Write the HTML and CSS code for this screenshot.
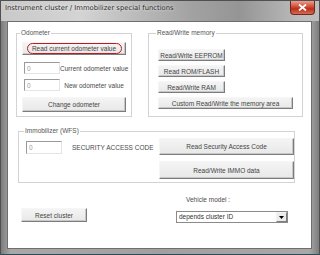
FILE: index.html
```html
<!DOCTYPE html>
<html lang="en">

<head>
    <meta charset="UTF-8">
    <title>Instrument cluster / Immobilizer special functions</title>
    <link rel="stylesheet" href="styles.css">
</head>

<body>
    <div class="window">
        <div class="titlebar">
            <span class="title">Instrument cluster / Immobilizer special functions</span>
            <button class="close-btn">
                <svg width="9" height="7" viewBox="0 0 9 7">
                    <path d="M1 0.5 L8 6.5 M8 0.5 L1 6.5" stroke="#fff" stroke-width="1.8" />
                </svg>
            </button>
        </div>

        <div class="client">
            <div class="top-row">
                <!-- Odometer -->
                <fieldset class="group odometer">
                    <legend>Odometer</legend>
                    <button class="btn btn-wide highlighted"><span class="ring">Read current odometer value</span></button>
                    <div class="field-row first">
                        <input class="num" type="text" value="0">
                        <span class="field-label">Current odometer value</span>
                    </div>
                    <div class="field-row">
                        <input class="num" type="text" value="0">
                        <span class="field-label">New odometer value</span>
                    </div>
                    <button class="btn btn-wide change">Change odometer</button>
                </fieldset>

                <!-- Read/Write memory -->
                <fieldset class="group memory">
                    <legend>Read/Write memory</legend>
                    <button class="btn btn-mem">Read/Write EEPROM</button>
                    <button class="btn btn-mem">Read ROM/FLASH</button>
                    <button class="btn btn-mem">Read/Write RAM</button>
                    <button class="btn btn-long">Custom Read/Write the memory area</button>
                </fieldset>
            </div>

            <!-- Immobilizer -->
            <fieldset class="group immo">
                <legend>Immobilizer (WFS)</legend>
                <div class="immo-left">
                    <input class="num code" type="text" value="0">
                    <span class="code-label">SECURITY ACCESS CODE</span>
                </div>
                <div class="immo-right">
                    <button class="btn btn-long tall">Read Security Access Code</button>
                    <button class="btn btn-long tall second">Read/Write IMMO data</button>
                </div>
            </fieldset>

            <div class="bottom-row">
                <button class="btn reset">Reset cluster</button>
                <div class="vehicle">
                    <span class="vehicle-label">Vehicle model :</span>
                    <div class="select">
                        <span class="select-text">depends cluster ID</span>
                        <span class="select-arrow">
                            <svg width="5" height="3" viewBox="0 0 5 3"><path d="M0 0 H5 L2.5 3 Z" fill="#000" /></svg>
                        </span>
                    </div>
                </div>
            </div>
        </div>
    </div>
</body>

</html>
```

FILE: styles.css
```css
body {
    margin: 0;
    font-family: "Liberation Sans", Arial, sans-serif;
    color: #4a4a4a;
}

.window {
    width: 320px;
    height: 255px;
    box-sizing: border-box;
    display: flex;
    flex-direction: column;
    background: linear-gradient(90deg, #7d7d7d, #a8a8a8 3%, #a0a0a0 50%, #a8a8a8 97%, #7d7d7d);
    border: 1px solid #505050;
    border-bottom-color: #2e4a52;
}

.titlebar {
    height: 20px;
    display: flex;
    align-items: flex-start;
    background: linear-gradient(90deg, #c9c9c9, #d4d4d4 25%, #a2a2a2 60%, #959595 75%, #bdbdbd 95%);
}

.title {
    margin: 3px 0 0 4px;
    font-family: "DejaVu Sans", sans-serif;
    font-size: 6.8px;
    line-height: 9px;
    color: #2a2a2a;
    text-shadow: 0 0 3px #fff;
}

.close-btn {
    margin: 0 4px 0 auto;
    width: 25px;
    height: 14px;
    padding: 0;
    border: 1px solid #6b2a20;
    border-top: none;
    border-radius: 0 0 4px 4px;
    background: linear-gradient(#e9a08f, #d24a31 45%, #b8301c 60%, #d86a4f);
    display: flex;
    align-items: center;
    justify-content: center;
}

.client {
    flex: 1;
    margin: 0 7px 5px 6px;
    background-color: #fff;
    border: 1px solid #6e6e6e;
    padding: 7px 0 0 8px;
    font-size: 6.5px;
}

.top-row {
    display: flex;
    gap: 16px;
}

.group {
    margin: 0;
    box-sizing: border-box;
    border: 1px solid #d3d3d3;
    border-radius: 0;
}

.group legend {
    padding: 0 1px;
    margin-left: -2px;
    line-height: 8px;
    font-size: 6.5px;
    color: #555;
}

.odometer {
    width: 116px;
    height: 88px;
    padding: 5px 0 0 5px;
}

.memory {
    width: 155px;
    height: 88px;
    padding: 12px 0 0 9px;
    display: flex;
    flex-direction: column;
    align-items: flex-start;
    gap: 4px;
}

.btn {
    display: block;
    box-sizing: border-box;
    padding: 0;
    font-family: "Liberation Sans", Arial, sans-serif;
    font-size: 6.5px;
    color: #444;
    background: linear-gradient(#f4f4f4, #e8e8e8);
    border: 1px solid;
    border-color: #f6f6f6 #7c7c7c #7c7c7c #f6f6f6;
    box-shadow: inset -1px -1px 0 #c8c8c8;
}

.btn-wide {
    width: 104px;
    height: 13px;
}

.highlighted {
    display: flex;
    align-items: center;
    justify-content: center;
}

.ring {
    width: 95px;
    height: 11px;
    box-sizing: border-box;
    border: 1px solid #c4161c;
    border-radius: 6px;
    line-height: 9px;
}

.change {
    height: 15px;
    margin-top: 6px;
}

.field-row {
    display: flex;
    align-items: center;
    margin-top: 5px;
    width: 106px;
}

.field-row.first {
    margin-top: 7px;
}

.num {
    box-sizing: border-box;
    width: 36px;
    height: 12px;
    padding: 0 0 0 2px;
    margin: 0 0 0 2px;
    font-family: "Liberation Sans", Arial, sans-serif;
    font-size: 6.5px;
    color: #9a9a9a;
    border: 1px solid;
    border-color: #9a9a9a #e4e4e4 #e4e4e4 #9a9a9a;
    background-color: #fff;
}

.field-label {
    flex: 1;
    text-align: center;
    white-space: nowrap;
}

.btn-mem {
    width: 67px;
    height: 12px;
}

.btn-long {
    width: 135px;
    height: 12px;
}

.immo {
    width: 276px;
    height: 56px;
    margin: 10px 0 0 2px;
    padding: 3px 0 0 7px;
    display: flex;
}

.immo-left {
    width: 133px;
    display: flex;
    align-items: center;
    align-self: flex-start;
    margin-top: 3px;
}

.immo-left .code {
    height: 13px;
    margin: 0;
}

.code-label {
    margin-left: 10px;
    white-space: nowrap;
}

.btn.tall {
    height: 17px;
}

.btn.second {
    height: 18px;
    margin-top: 6px;
}

.bottom-row {
    display: flex;
    margin-top: 13px;
}

.reset {
    width: 66px;
    height: 14px;
    margin: 12px 0 0 5px;
}

.vehicle {
    margin-left: 89px;
    display: flex;
    flex-direction: column;
}

.vehicle-label {
    margin-left: 10px;
    line-height: 8px;
}

.select {
    width: 112px;
    height: 12px;
    box-sizing: border-box;
    margin-top: 7px;
    display: flex;
    align-items: stretch;
    border: 1px solid #8a8a8a;
    background-color: #fff;
}

.select-text {
    flex: 1;
    padding-left: 2px;
    line-height: 10px;
    color: #333;
}

.select-arrow {
    width: 9px;
    display: flex;
    align-items: center;
    justify-content: center;
    border: 1px solid;
    border-color: #f4f4f4 #7c7c7c #7c7c7c #f4f4f4;
    background-color: #ececec;
}
```
